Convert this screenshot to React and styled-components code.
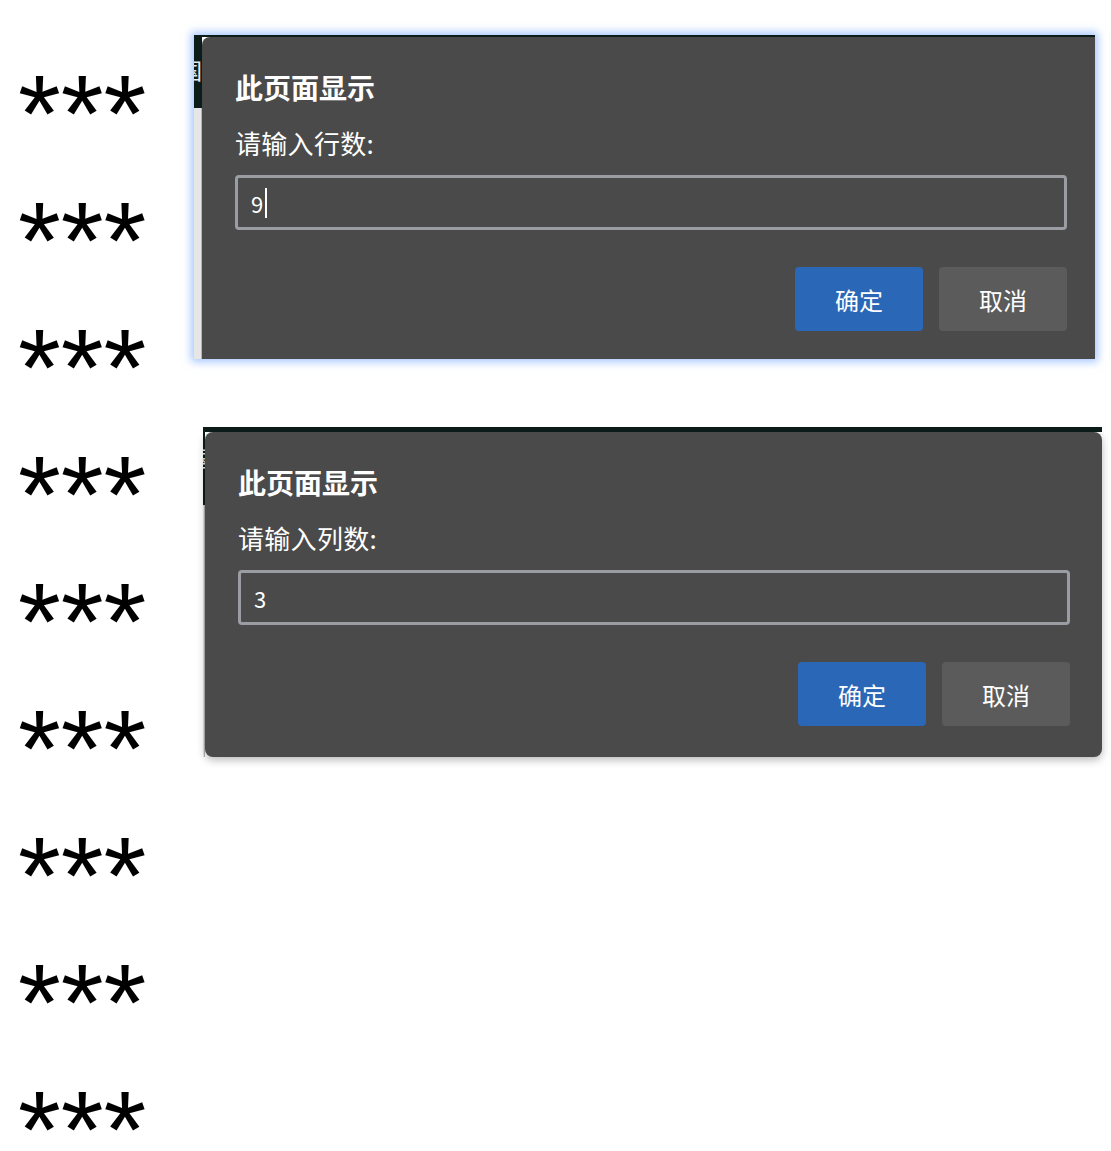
import styled, { createGlobalStyle } from "styled-components";

const GlobalStyle = createGlobalStyle`
  html, body {
    margin: 0;
    padding: 0;
    background: #ffffff;
  }
  body {
    font-family: "Noto Sans CJK SC", "Noto Sans", sans-serif;
  }
`;

const Page = styled.div`
  display: grid;
  grid-template-columns: 194px 1fr;
  width: 1111px;
  height: 1151px;
  overflow: hidden;
`;

const StarColumn = styled.div`
  display: flex;
  flex-direction: column;
  padding: 49px 0 0 18px;
`;

const StarRow = styled.div`
  font-family: "Liberation Sans", Arial, sans-serif;
  font-size: 110px;
  line-height: 127px;
  height: 127px;
  color: #000;
  white-space: nowrap;
`;

const DialogColumn = styled.div`
  display: flex;
  flex-direction: column;
  align-items: flex-start;
  padding-top: 35px;
`;

const Shot = styled.div`
  display: flex;
  align-items: stretch;
  width: ${(p) => p.$width}px;
  height: ${(p) => (p.$height ? `${p.$height}px` : "auto")};
  margin-left: ${(p) => p.$offset || 0}px;
  margin-top: ${(p) => p.$top || 0}px;
  border-top: ${(p) => p.$bar}px solid #0c1d19;
  overflow: ${(p) => (p.$glow ? "hidden" : "visible")};
  box-sizing: border-box;
  box-shadow: ${(p) =>
    p.$glow ? "0 0 8px 3px rgba(110, 165, 255, 0.6)" : "none"};
`;

const Strip = styled.div`
  flex: 0 0 ${(p) => p.$width}px;
  min-width: 0;
  overflow: hidden;
  display: flex;
  flex-direction: column;
`;

const StripDark = styled.div`
  flex: 0 0 ${(p) => p.$height}px;
  box-sizing: border-box;
  background: #0c1d19;
  color: #e8e8e8;
  font-size: 22px;
  line-height: 1;
  overflow: hidden;
  padding-top: ${(p) => p.$pad}px;
  text-indent: -14px;
  white-space: nowrap;
`;

const StripLight = styled.div`
  flex: 1;
  background: #e6e6e6;
  box-shadow: inset -1px 0 0 #b5b5b5;
`;

const Card = styled.div`
  flex: ${(p) => (p.$full ? "1" : "0 0 897px")};
  display: flex;
  flex-direction: column;
  background: #4a4a4a;
  color: #ffffff;
  border-radius: ${(p) => (p.$full ? "8px" : "8px 0 0 0")};
  padding: 32px 32px 31px 33px;
  box-sizing: border-box;
  box-shadow: ${(p) => (p.$full ? "0 3px 8px rgba(0, 0, 0, 0.28)" : "none")};
  & > * {
    flex-shrink: 0;
  }
`;

const Title = styled.div`
  font-size: 28px;
  font-weight: 700;
  line-height: 36px;
`;

const Label = styled.div`
  font-size: 26px;
  line-height: 34px;
  margin-top: 21px;
  letter-spacing: 0.3px;
`;

const Field = styled.div`
  display: flex;
  align-items: center;
  height: 55px;
  margin-top: 15px;
  border: 3px solid #9a9ea2;
  border-radius: 4px;
  padding: 0 13px;
  box-sizing: border-box;
  font-size: 22px;
  color: #ffffff;
`;

const Caret = styled.span`
  display: inline-block;
  width: 2px;
  height: 30px;
  margin-left: 2px;
  background: #ffffff;
`;

const Actions = styled.div`
  display: flex;
  justify-content: flex-end;
  gap: 16px;
  margin-top: 37px;
`;

const Button = styled.div`
  width: 128px;
  height: 64px;
  display: flex;
  align-items: center;
  justify-content: center;
  border-radius: 4px;
  font-size: 24px;
  color: #ffffff;
  background: ${(p) => (p.$primary ? "#2b67b7" : "#5b5b5b")};
`;

const Dialog = ({ label, value, caret, full }) => (
  <Card $full={full}>
    <Title>此页面显示</Title>
    <Label>{label}</Label>
    <Field>
      {value}
      {caret && <Caret />}
    </Field>
    <Actions>
      <Button $primary>确定</Button>
      <Button>取消</Button>
    </Actions>
  </Card>
);

const App = () => {
  const rows = Array.from({ length: 9 }, (_, i) => i);
  return (
    <>
      <GlobalStyle />
      <Page>
        <StarColumn>
          {rows.map((i) => (
            <StarRow key={i}>***</StarRow>
          ))}
        </StarColumn>
        <DialogColumn>
          <Shot $width={901} $height={324} $bar={2} $glow>
            <Strip $width={8}>
              <StripDark $height={71} $pad={21}>国</StripDark>
              <StripLight />
            </Strip>
            <Dialog label="请输入行数:" value="9" caret />
          </Shot>
          <Shot $width={899} $bar={5} $offset={9} $top={68}>
            <Strip $width={2}>
              <StripDark $height={73} $pad={14}>国</StripDark>
              <StripLight />
            </Strip>
            <Dialog label="请输入列数:" value="3" full />
          </Shot>
        </DialogColumn>
      </Page>
    </>
  );
};

export default App;
